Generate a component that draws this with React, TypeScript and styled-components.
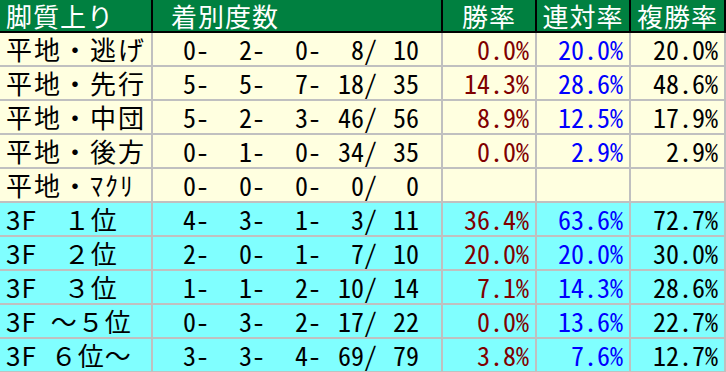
import React from 'react'
import styled, { createGlobalStyle } from 'styled-components'

const GlobalStyle = createGlobalStyle`
  html, body {
    margin: 0;
    padding: 0;
    background: #ffffff;
  }
  body {
    font-family: "Noto Sans CJK JP", "Noto Sans", sans-serif;
  }
`

type Row = {
    label: string
    spacing: number
    tone: 'cream' | 'cyan'
    counts: [string, string, string, string, string]
    rates: [string, string, string] | null
}

const rows: Row[] = [
    { label: '平地・逃げ', spacing: 2, tone: 'cream', counts: ['0', '2', '0', '8', '10'], rates: ['0.0%', '20.0%', '20.0%'] },
    { label: '平地・先行', spacing: 2, tone: 'cream', counts: ['5', '5', '7', '18', '35'], rates: ['14.3%', '28.6%', '48.6%'] },
    { label: '平地・中団', spacing: 2, tone: 'cream', counts: ['5', '2', '3', '46', '56'], rates: ['8.9%', '12.5%', '17.9%'] },
    { label: '平地・後方', spacing: 2, tone: 'cream', counts: ['0', '1', '0', '34', '35'], rates: ['0.0%', '2.9%', '2.9%'] },
    { label: '平地・ﾏｸﾘ', spacing: 2, tone: 'cream', counts: ['0', '0', '0', '0', '0'], rates: null },
    { label: '3F　１位', spacing: 1, tone: 'cyan', counts: ['4', '3', '1', '3', '11'], rates: ['36.4%', '63.6%', '72.7%'] },
    { label: '3F　２位', spacing: 1, tone: 'cyan', counts: ['2', '0', '1', '7', '10'], rates: ['20.0%', '20.0%', '30.0%'] },
    { label: '3F　３位', spacing: 1, tone: 'cyan', counts: ['1', '1', '2', '10', '14'], rates: ['7.1%', '14.3%', '28.6%'] },
    { label: '3F\u2002～５位', spacing: 1, tone: 'cyan', counts: ['0', '3', '2', '17', '22'], rates: ['0.0%', '13.6%', '22.7%'] },
    { label: '3F\u2002６位～', spacing: 1, tone: 'cyan', counts: ['3', '3', '4', '69', '79'], rates: ['3.8%', '7.6%', '12.7%'] },
]

const rateColors = ['#800000', '#0000ff', '#000000']

const App: React.FC = () => {
    return (
        <>
            <GlobalStyle />
            <Table>
                <HeaderRow>
                    <HeaderCell $pad={6}>脚質上り</HeaderCell>
                    <HeaderCell $pad={18}>着別度数</HeaderCell>
                    <HeaderCell $center>勝率</HeaderCell>
                    <HeaderCell $center>連対率</HeaderCell>
                    <HeaderCell $center>複勝率</HeaderCell>
                </HeaderRow>
                {rows.map((row) => (
                    <BodyRow key={row.label}>
                        <Cell $tone={row.tone}>
                            <Label $spacing={row.spacing}>{row.label}</Label>
                        </Cell>
                        <Cell $tone={row.tone}>
                            <Slot $w={56}>{row.counts[0]}-</Slot>
                            <Slot $w={56}>{row.counts[1]}-</Slot>
                            <Slot $w={56}>{row.counts[2]}-</Slot>
                            <Slot $w={56}>{row.counts[3]}/</Slot>
                            <Slot $w={42}>{row.counts[4]}</Slot>
                        </Cell>
                        {[0, 1, 2].map((i) => (
                            <RateCell key={i} $tone={row.tone} $color={rateColors[i]}>
                                {row.rates ? row.rates[i] : ''}
                            </RateCell>
                        ))}
                    </BodyRow>
                ))}
            </Table>
        </>
    )
}

const Table = styled.div`
    width: 726px;
    height: 372px;
    overflow: hidden;
    display: flex;
    flex-direction: column;
    font-size: 26px;
    line-height: 1.15;
`

const HeaderRow = styled.div`
    display: grid;
    grid-template-columns: 151px 288px 92px 92px 93px;
    column-gap: 2px;
    padding: 0 2px 2px 0;
    height: 33px;
    box-sizing: border-box;
    background: #000000;
    flex: none;
`

const HeaderCell = styled.div<{ $pad?: number; $center?: boolean }>`
    background: #008040;
    color: #ffffff;
    display: flex;
    align-items: center;
    justify-content: ${(p) => (p.$center ? 'center' : 'flex-start')};
    padding-left: ${(p) => p.$pad ?? 0}px;
    letter-spacing: 1px;
    line-height: 1;
    white-space: pre;
`

const BodyRow = styled.div`
    display: grid;
    grid-template-columns: 151px 288px 92px 92px 93px;
    column-gap: 2px;
    padding: 0 2px 2px 0;
    height: 34px;
    box-sizing: border-box;
    background: #c0c0c0;
    flex: none;
`

const Cell = styled.div<{ $tone: 'cream' | 'cyan' }>`
    background: ${(p) => (p.$tone === 'cream' ? '#ffffe0' : '#80ffff')};
    color: #000000;
    display: flex;
    align-items: center;
    font-feature-settings: "hwid" 1;
`

const Label = styled.span<{ $spacing: number }>`
    padding-left: 6px;
    letter-spacing: ${(p) => p.$spacing}px;
    white-space: pre;
    font-feature-settings: normal;
`

const Slot = styled.span<{ $w: number }>`
    width: ${(p) => p.$w}px;
    flex: none;
    text-align: right;
    white-space: pre;
`

const RateCell = styled(Cell)<{ $color: string }>`
    color: ${(p) => p.$color};
    justify-content: flex-end;
    padding-right: 6px;
`

export default App
